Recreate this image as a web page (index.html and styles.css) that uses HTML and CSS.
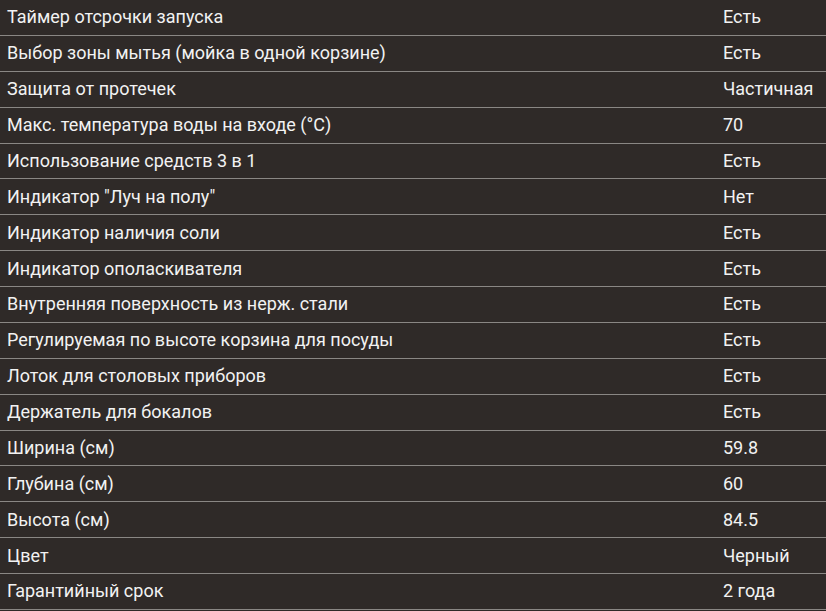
FILE: index.html
```html
<!DOCTYPE html>
<html lang="ru">
<head>
<meta charset="utf-8">
<title>Характеристики</title>
<link rel="stylesheet" href="styles.css">
</head>
<body>
<div class="specs">
<div class="row"><div class="name">Таймер отсрочки запуска</div><div class="val">Есть</div></div>
<div class="row"><div class="name">Выбор зоны мытья (мойка в одной корзине)</div><div class="val">Есть</div></div>
<div class="row"><div class="name">Защита от протечек</div><div class="val">Частичная</div></div>
<div class="row"><div class="name">Макс. температура воды на входе (°C)</div><div class="val">70</div></div>
<div class="row"><div class="name">Использование средств 3 в 1</div><div class="val">Есть</div></div>
<div class="row"><div class="name">Индикатор "Луч на полу"</div><div class="val">Нет</div></div>
<div class="row"><div class="name">Индикатор наличия соли</div><div class="val">Есть</div></div>
<div class="row"><div class="name">Индикатор ополаскивателя</div><div class="val">Есть</div></div>
<div class="row"><div class="name">Внутренняя поверхность из нерж. стали</div><div class="val">Есть</div></div>
<div class="row"><div class="name">Регулируемая по высоте корзина для посуды</div><div class="val">Есть</div></div>
<div class="row"><div class="name">Лоток для столовых приборов</div><div class="val">Есть</div></div>
<div class="row"><div class="name">Держатель для бокалов</div><div class="val">Есть</div></div>
<div class="row"><div class="name">Ширина (см)</div><div class="val">59.8</div></div>
<div class="row"><div class="name">Глубина (см)</div><div class="val">60</div></div>
<div class="row"><div class="name">Высота (см)</div><div class="val">84.5</div></div>
<div class="row"><div class="name">Цвет</div><div class="val">Черный</div></div>
<div class="row"><div class="name">Гарантийный срок</div><div class="val">2 года</div></div>
</div>
</body>
</html>
```
FILE: styles.css
```css
html, body {
  margin: 0;
  padding: 0;
  background: #2f2a28;
}
.specs {
  width: 826px;
  font-family: Roboto, "Liberation Sans", sans-serif;
  font-size: 18px;
  color: #f2f2f2;
}
.row {
  display: grid;
  grid-template-columns: 1fr 110px;
  align-items: center;
  height: 35.875px;
  box-sizing: border-box;
  border-bottom: 1px solid #8a8784;
  line-height: 20px;
  white-space: nowrap;
}
.name, .val {
  padding-left: 7px;
}
```
